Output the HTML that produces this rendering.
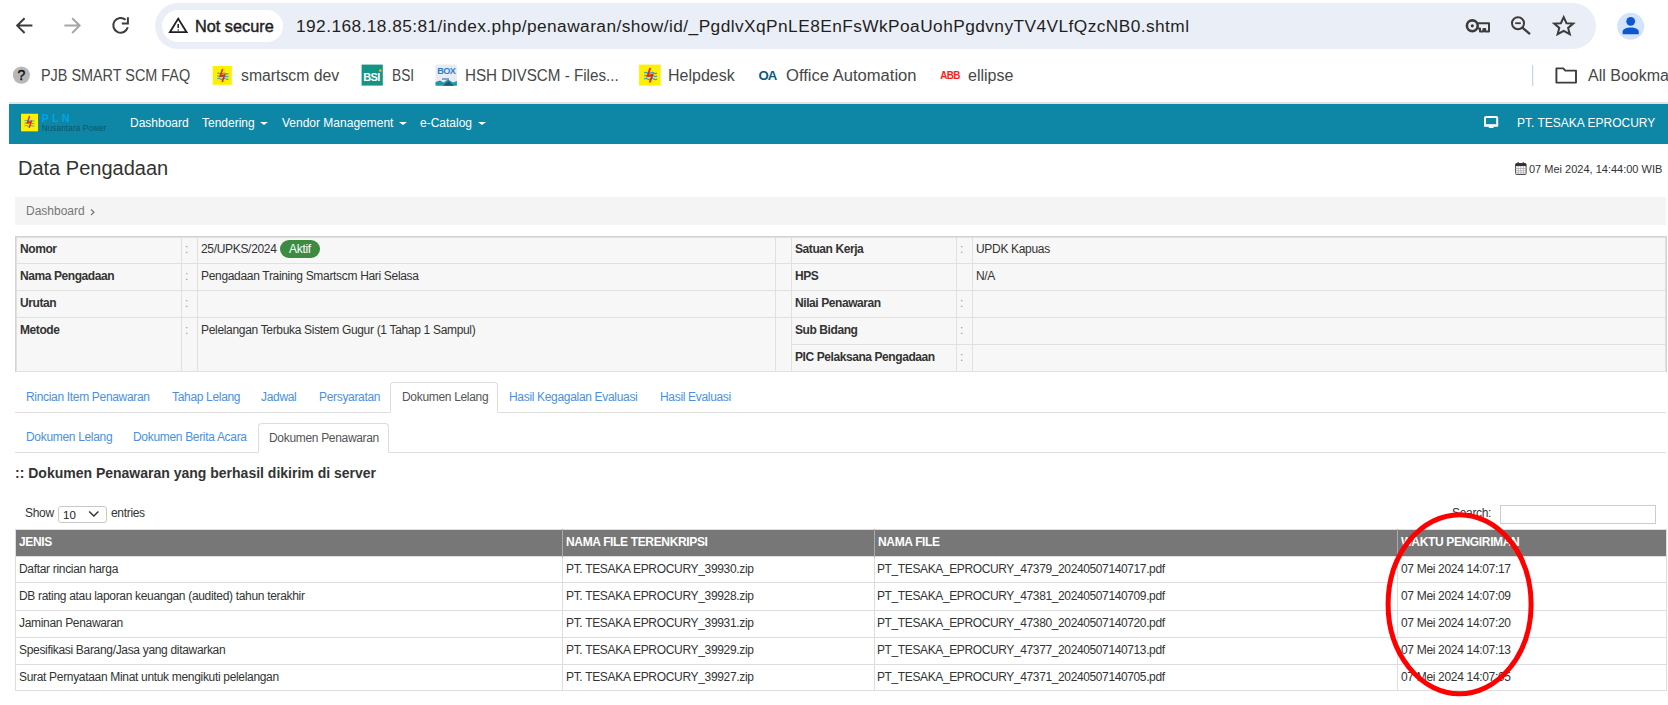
<!DOCTYPE html>
<html><head><meta charset="utf-8">
<style>
*{box-sizing:border-box;margin:0;padding:0}
html,body{width:1668px;height:705px;overflow:hidden;background:#fff;font-family:"Liberation Sans",sans-serif;color:#333}
.abs{position:absolute}
.nw{white-space:nowrap}
/* chrome */
#omni{position:absolute;left:155px;top:2.8px;width:1441px;height:45.8px;border-radius:23px;background:#eaeef6}
#chip{position:absolute;left:162px;top:10px;width:121px;height:32px;border-radius:16px;background:#fff}
.url{position:absolute;left:296px;top:13.7px;font-size:17.3px;letter-spacing:0.44px;color:#1f1f1f;line-height:24px}
.bm{position:absolute;top:64px;transform-origin:0 0;font-size:16px;line-height:24px;color:#474747}
/* navbar */
#nav{position:absolute;left:9px;top:102px;width:1659px;height:42px;background:#0e87a6;border-top:2px solid #e3e3e3}
.nv{position:absolute;top:115px;font-size:12px;color:#fff;line-height:16px}
.caret{display:inline-block;width:0;height:0;border-left:4px solid transparent;border-right:4px solid transparent;border-top:3.6px solid #fff;vertical-align:2px;margin-left:5.5px}
/* info table */
table{border-collapse:collapse}
#infow{position:absolute;left:15px;top:236px;width:1652px;height:136px;border:1px solid #d4d4d4;background:#f7f7f7}
#info{position:absolute;left:0;top:0;width:1650px;table-layout:fixed;background:#f7f7f7}
#info td{border:1px solid #e0e0e0;height:27px;font-size:12px;letter-spacing:-0.32px;vertical-align:middle;padding:0 3px 1px 3px;line-height:13px;white-space:nowrap;color:#333}
#info tr:first-child td{height:26px;padding-bottom:3px}
#info td.l{font-weight:bold;letter-spacing:-0.42px}
#info td.c{color:#999;padding-left:3px}
#info td.m{vertical-align:top;padding-top:6px}
/* tabs */
.tabs{position:absolute;left:15px;width:1651px;border-bottom:1px solid #ddd}
.tab{position:absolute;font-size:12px;letter-spacing:-0.32px;color:#4a90e2;line-height:14px;white-space:nowrap}
.tab.act{color:#555;border:1px solid #ddd;border-bottom:1px solid #fff;border-radius:4px 4px 0 0;background:#fff}
/* data table */
#dt{position:absolute;left:15px;top:529px;width:1652px;table-layout:fixed;border:1px solid #ddd}
#dt th{background:#777;color:#fff;font-size:12px;letter-spacing:-0.35px;font-weight:bold;text-align:left;height:27px;padding:0 3px 2px 3px;border-left:1px solid #aaa;line-height:13px;white-space:nowrap}
#dt tr.r1 td{height:26px;padding-bottom:1px}
#dt tr.r2 td{height:28px;padding-bottom:1px}
#dt tr.r5 td{height:26px;padding-bottom:1px}
#dt td.f{letter-spacing:-0.38px;padding-left:2px}
#dt td{height:27px;font-size:12px;letter-spacing:-0.32px;padding:0 3px 2px 3px;border:1px solid #ddd;line-height:13px;white-space:nowrap;color:#333}
</style></head><body>

<!-- ============ BROWSER CHROME ============ -->
<div id="omni"></div>
<div id="chip"></div>
<div class="url nw">192.168.18.85:81/index.php/penawaran/show/id/_PgdlvXqPnLE8EnFsWkPoaUohPgdvnyTV4VLfQzcNB0.shtml</div>
<div class="abs nw" style="left:195px;top:13.7px;font-size:16.3px;line-height:24px;color:#1f1f1f;-webkit-text-stroke:0.45px #1f1f1f">Not secure</div>


<!-- chrome icons -->
<svg class="abs" style="left:0;top:0" width="1668" height="100">
 <g fill="none" stroke-width="2" stroke-linecap="butt">
  <path d="M24.6 18.2 L17.2 25.6 L24.6 33 M17.2 25.6 H32.4" stroke="#3c3c3c"/>
  <path d="M72.2 18.2 L79.6 25.6 L72.2 33 M79.6 25.6 H64.4" stroke="#a6a6a6"/>
  <path d="M127.8 27.3 A7.4 7.4 0 1 1 125.6 19.8" stroke="#3c3c3c"/>
  <path d="M127.9 17.2 V23.6 H121.8" stroke="#3c3c3c"/>
  <path d="M178.2 18.6 L169.9 32.2 H186.6 Z" stroke="#1f1f1f" stroke-width="1.8" stroke-linejoin="miter"/>
  <path d="M178.2 24 V28" stroke="#1f1f1f" stroke-width="1.5"/>
  <circle cx="178.2" cy="30" r="0.8" fill="#1f1f1f" stroke="none"/>
  <!-- key -->
  <circle cx="1472.3" cy="25.8" r="5.4" stroke="#3c3c3c" stroke-width="2.6"/>
  <circle cx="1472.3" cy="25.8" r="1.6" fill="#3c3c3c" stroke="none"/>
  <path d="M1477.8 23.2 H1489 V31.5 H1485.2 V29 H1483.4 V31.5 H1480 V28.4 H1477.8" stroke="#3c3c3c" stroke-width="2" stroke-linejoin="round"/>
  <!-- zoom -->
  <circle cx="1518" cy="23.2" r="6" stroke="#3c3c3c" stroke-width="2"/>
  <path d="M1515.2 23.2 H1520.8" stroke="#3c3c3c" stroke-width="1.8"/>
  <path d="M1522.4 27.6 L1530 34.2" stroke="#3c3c3c" stroke-width="2.2"/>
  <!-- star -->
  <path d="M1563.7 17.2 L1566.5 23.2 L1573.2 23.6 L1568.1 27.9 L1569.8 34.2 L1563.7 30.8 L1557.6 34.2 L1559.3 27.9 L1554.2 23.6 L1560.9 23.2 Z" stroke="#3c3c3c" stroke-width="2" stroke-linejoin="miter"/>
 </g>
 <!-- avatar -->
 <circle cx="1630.7" cy="26.2" r="13.5" fill="#d3e3fd"/>
 <circle cx="1630.7" cy="21.3" r="4.4" fill="#0b57d0"/>
 <path d="M1622.6 34.2 V31.8 C1622.6 29 1627 27.6 1630.7 27.6 C1634.4 27.6 1638.8 29 1638.8 31.8 V34.2 Z" fill="#0b57d0"/>
 <!-- bookmark icons -->
 <circle cx="21.4" cy="75.1" r="8.6" fill="#b8b8b8"/>
 <text x="21.4" y="80.3" font-family="Liberation Sans" font-size="14" text-anchor="middle" fill="#111" stroke="#111" stroke-width="0.4">?</text>
 <!-- PLN icons -->
 <g id="plnic">
  <rect x="212.8" y="66" width="19" height="18.8" fill="#fff000"/>
  <path d="M217.3 73.5 q1.4 -1 2.8 0 t2.8 0 t2.8 0 t2.8 0 M217.3 76.2 q1.4 -1 2.8 0 t2.8 0 t2.8 0 t2.8 0 M217.3 78.9 q1.4 -1 2.8 0 t2.8 0 t2.8 0 t2.8 0" stroke="#2aa6c8" stroke-width="1.1" fill="none"/>
  <path d="M222.6 69 L220.2 76.3 L224.6 75 L222.2 82" stroke="#e8202a" stroke-width="1.6" fill="none"/>
 </g>
 <g transform="translate(639.1 64.6) scale(1.137 1.117) translate(-212.8 -66)"><use href="#plnic"/></g>
 <!-- BSI -->
 <rect x="361.6" y="64.6" width="21.2" height="21" fill="#139485"/>
 <text x="363.2" y="80.6" font-family="Liberation Sans" font-weight="bold" font-size="11" fill="#fff" letter-spacing="-0.6">BSI</text>
 <circle cx="380.3" cy="70.6" r="1.4" fill="#f7a541"/>
 <!-- BOX -->
 <rect x="435.5" y="64.6" width="21.4" height="21.1" rx="2" fill="#e6ecf0"/>
 <text x="446.2" y="74.4" font-family="Liberation Sans" font-weight="bold" font-size="9.2" text-anchor="middle" fill="#2f7ccc" letter-spacing="-0.6">BOX</text>
 <rect x="442" y="78" width="7" height="2" fill="#8aa0c8"/>
 <path d="M435.5 82 L440 80.5 L443.5 82.5 L448 79.5 L453 82.5 L456.9 81 V85.7 H435.5 Z" fill="#2596a8"/>
 <path d="M443 85.7 L448.5 81 L454 85.7 Z" fill="#1b5d75"/>
 <!-- OA -->
 <text x="758.4" y="80.3" font-family="Liberation Sans" font-weight="bold" font-size="13.2" fill="#0b5a7e" letter-spacing="-1">OA</text>
 <!-- ABB -->
 <text x="940.2" y="79.1" font-family="Liberation Sans" font-weight="bold" font-size="10.6" fill="#ff1a1a" letter-spacing="-0.6" transform="translate(940.2 0) scale(0.93 1) translate(-940.2 0)">ABB</text>
 <!-- separator + folder -->
 <rect x="1532" y="65.4" width="1.2" height="20.6" fill="#c7d3e8"/>
 <path d="M1556.4 68.4 H1563.2 L1565.4 70.6 H1576 V82.6 H1556.4 Z" fill="none" stroke="#3c3c3c" stroke-width="1.9" stroke-linejoin="round"/>
</svg>

<!-- bookmarks -->
<div class="bm nw" style="left:41px;transform:scaleX(0.9)">PJB SMART SCM FAQ</div>
<div class="bm nw" style="left:241px;transform:scaleX(0.986)">smartscm dev</div>
<div class="bm nw" style="left:392px;transform:scaleX(0.857)">BSI</div>
<div class="bm nw" style="left:465px;transform:scaleX(0.95)">HSH DIVSCM - Files...</div>
<div class="bm nw" style="left:668px">Helpdesk</div>
<div class="bm nw" style="left:786px;transform:scaleX(1.036)">Office Automation</div>
<div class="bm nw" style="left:968px">ellipse</div>
<div class="bm nw" style="left:1588px">All Bookmarks</div>

<!-- ============ NAVBAR ============ -->
<div id="nav"></div>
<div class="nv nw" style="left:130px">Dashboard</div>
<div class="nv nw" style="left:202px">Tendering<span class="caret"></span></div>
<div class="nv nw" style="left:282px">Vendor Management<span class="caret"></span></div>
<div class="nv nw" style="left:420px">e-Catalog<span class="caret"></span></div>
<div class="nv nw" style="left:1517px">PT. TESAKA EPROCURY</div>


<!-- navbar icons -->
<svg class="abs" style="left:0;top:100px" width="1668" height="50">
 <rect x="20.5" y="13.2" width="18" height="18.6" fill="#0b74a6"/>
 <rect x="21" y="13.7" width="17.1" height="17.7" fill="#fff200"/>
 <path d="M24.5 20.8 q1.25 -0.9 2.5 0 t2.5 0 t2.5 0 t2.5 0 M24.5 23.3 q1.25 -0.9 2.5 0 t2.5 0 t2.5 0 t2.5 0 M24.5 25.8 q1.25 -0.9 2.5 0 t2.5 0 t2.5 0 t2.5 0" stroke="#2aa6c8" stroke-width="0.9" fill="none"/>
 <path d="M29.6 16 L27.4 22.8 L31.2 21.6 L29.2 27.8" stroke="#e8202a" stroke-width="1.4" fill="none"/>
 <text x="41.5" y="22.4" font-family="Liberation Sans" font-weight="bold" font-size="10.8" fill="#00a3e6" letter-spacing="3.2">PLN</text>
 <text x="41.7" y="31.2" font-family="Liberation Sans" font-size="8.2" fill="#0d5669" letter-spacing="0.1">Nusantara Power</text>
 <!-- monitor -->
 <rect x="1485" y="17" width="12.2" height="8.6" rx="1" fill="none" stroke="#fff" stroke-width="2"/>
 <rect x="1484" y="24.4" width="14.2" height="2.2" fill="#fff"/>
 <rect x="1488.8" y="26.4" width="4.7" height="1.6" fill="#fff"/>
</svg>
<svg class="abs" style="left:1514px;top:162px" width="14" height="14">
 <rect x="1.6" y="1.5" width="10.5" height="11" rx="1" fill="none" stroke="#444" stroke-width="1"/>
 <rect x="1.6" y="1.5" width="10.5" height="2.6" fill="#333"/>
 <path d="M1.6 6.5 H12 M1.6 8.7 H12 M1.6 10.8 H12 M4.2 4 V12.5 M6.8 4 V12.5 M9.4 4 V12.5" stroke="#999" stroke-width="0.6"/>
 <rect x="3.6" y="0.3" width="1.4" height="2.5" fill="#333"/>
 <rect x="8.7" y="0.3" width="1.4" height="2.5" fill="#333"/>
</svg>

<!-- title -->
<div class="abs nw" style="left:18px;top:156px;font-size:20px;line-height:24px;color:#333">Data Pengadaan</div>
<div class="abs nw" style="left:1529px;top:162px;font-size:11px;line-height:14px;color:#333">07 Mei 2024, 14:44:00 WIB</div>

<!-- breadcrumb -->
<div class="abs" style="left:15px;top:197px;width:1651px;height:28px;background:#f4f4f4"></div>
<div class="abs nw" style="left:26px;top:204px;font-size:12px;line-height:14px;color:#777">Dashboard</div>
<svg class="abs" style="left:89px;top:208px" width="8" height="8"><path d="M2 1.5 L5 4.3 L2 7" fill="none" stroke="#777" stroke-width="1.2"/></svg>

<!-- info table -->
<div id="infow"><table id="info">
<colgroup><col style="width:165px"><col style="width:16px"><col style="width:578px"><col style="width:16px"><col style="width:165px"><col style="width:16px"><col></colgroup>
<tr><td class="l">Nomor</td><td class="c">:</td><td>25/UPKS/2024 <span style="display:inline-block;background:#3d8b40;color:#fff;border-radius:9px;padding:0 9.5px;line-height:18px">Aktif</span></td><td></td><td class="l">Satuan Kerja</td><td class="c">:</td><td>UPDK Kapuas</td></tr>
<tr><td class="l">Nama Pengadaan</td><td class="c">:</td><td>Pengadaan Training Smartscm Hari Selasa</td><td></td><td class="l">HPS</td><td class="c"></td><td>N/A</td></tr>
<tr><td class="l">Urutan</td><td class="c">:</td><td></td><td></td><td class="l">Nilai Penawaran</td><td class="c">:</td><td></td></tr>
<tr><td class="l m" rowspan="2">Metode</td><td class="c m" rowspan="2">:</td><td class="m" rowspan="2">Pelelangan Terbuka Sistem Gugur (1 Tahap 1 Sampul)</td><td rowspan="2"></td><td class="l">Sub Bidang</td><td class="c">:</td><td></td></tr>
<tr><td class="l">PIC Pelaksana Pengadaan</td><td class="c">:</td><td></td></tr>
</table></div>

<!-- tabs -->
<div class="tabs" style="top:381px;height:32px"></div>
<div class="tab" style="left:26px;top:390px">Rincian Item Penawaran</div>
<div class="tab" style="left:172px;top:390px">Tahap Lelang</div>
<div class="tab" style="left:261px;top:390px">Jadwal</div>
<div class="tab" style="left:319px;top:390px">Persyaratan</div>
<div class="tab act" style="left:390px;top:382px;width:108px;height:31px;padding:7px 0 0 11px">Dokumen Lelang</div>
<div class="tab" style="left:509px;top:390px">Hasil Kegagalan Evaluasi</div>
<div class="tab" style="left:660px;top:390px">Hasil Evaluasi</div>

<div class="tabs" style="top:422px;height:31px"></div>
<div class="tab" style="left:26px;top:430px">Dokumen Lelang</div>
<div class="tab" style="left:133px;top:430px">Dokumen Berita Acara</div>
<div class="tab act" style="left:258px;top:423px;width:131px;height:30px;padding:7px 0 0 10px">Dokumen Penawaran</div>

<div class="abs nw" style="left:15px;top:465px;font-size:14px;line-height:16px;font-weight:bold;color:#333">:: Dokumen Penawaran yang berhasil dikirim di server</div>

<div class="abs nw" style="left:25px;top:507px;font-size:12px;letter-spacing:-0.32px;line-height:13px;color:#333">Show</div>
<div class="abs" style="left:58px;top:506px;width:49px;height:17px;border:1px solid #c8c8c8;border-radius:3px;background:#fff"></div>
<div class="abs nw" style="left:63px;top:509px;font-size:11.5px;line-height:12px;color:#222">10</div>
<svg class="abs" style="left:88px;top:510px" width="12" height="8"><path d="M1.2 1.5 L5.8 6 L10.4 1.5" fill="none" stroke="#333" stroke-width="1.5"/></svg>
<div class="abs nw" style="left:111px;top:507px;font-size:12px;letter-spacing:-0.32px;line-height:13px;color:#333">entries</div>
<div class="abs nw" style="left:1452px;top:507px;font-size:12px;letter-spacing:-0.32px;line-height:13px;color:#333">Search:</div>
<div class="abs" style="left:1500px;top:505px;width:156px;height:19px;border:1px solid #ccc;background:#fff"></div>

<table id="dt">
<colgroup><col style="width:547px"><col style="width:312px"><col style="width:523px"><col></colgroup>
<tr><th style="border-left:0">JENIS</th><th>NAMA FILE TERENKRIPSI</th><th>NAMA FILE</th><th>WAKTU PENGIRIMAN</th></tr>
<tr class="r1"><td>Daftar rincian harga</td><td>PT. TESAKA EPROCURY_39930.zip</td><td class="f">PT_TESAKA_EPROCURY_47379_20240507140717.pdf</td><td>07 Mei 2024 14:07:17</td></tr>
<tr class="r2"><td>DB rating atau laporan keuangan (audited) tahun terakhir</td><td>PT. TESAKA EPROCURY_39928.zip</td><td class="f">PT_TESAKA_EPROCURY_47381_20240507140709.pdf</td><td>07 Mei 2024 14:07:09</td></tr>
<tr><td>Jaminan Penawaran</td><td>PT. TESAKA EPROCURY_39931.zip</td><td class="f">PT_TESAKA_EPROCURY_47380_20240507140720.pdf</td><td>07 Mei 2024 14:07:20</td></tr>
<tr><td>Spesifikasi Barang/Jasa yang ditawarkan</td><td>PT. TESAKA EPROCURY_39929.zip</td><td class="f">PT_TESAKA_EPROCURY_47377_20240507140713.pdf</td><td>07 Mei 2024 14:07:13</td></tr>
<tr class="r5"><td>Surat Pernyataan Minat untuk mengikuti pelelangan</td><td>PT. TESAKA EPROCURY_39927.zip</td><td class="f">PT_TESAKA_EPROCURY_47371_20240507140705.pdf</td><td>07 Mei 2024 14:07:05</td></tr>
</table>

<!-- red ellipse -->
<svg class="abs" style="left:0;top:0" width="1668" height="705"><ellipse cx="1459.6" cy="604.2" rx="71.5" ry="89.5" fill="none" stroke="#f00" stroke-width="5"/></svg>

</body></html>
